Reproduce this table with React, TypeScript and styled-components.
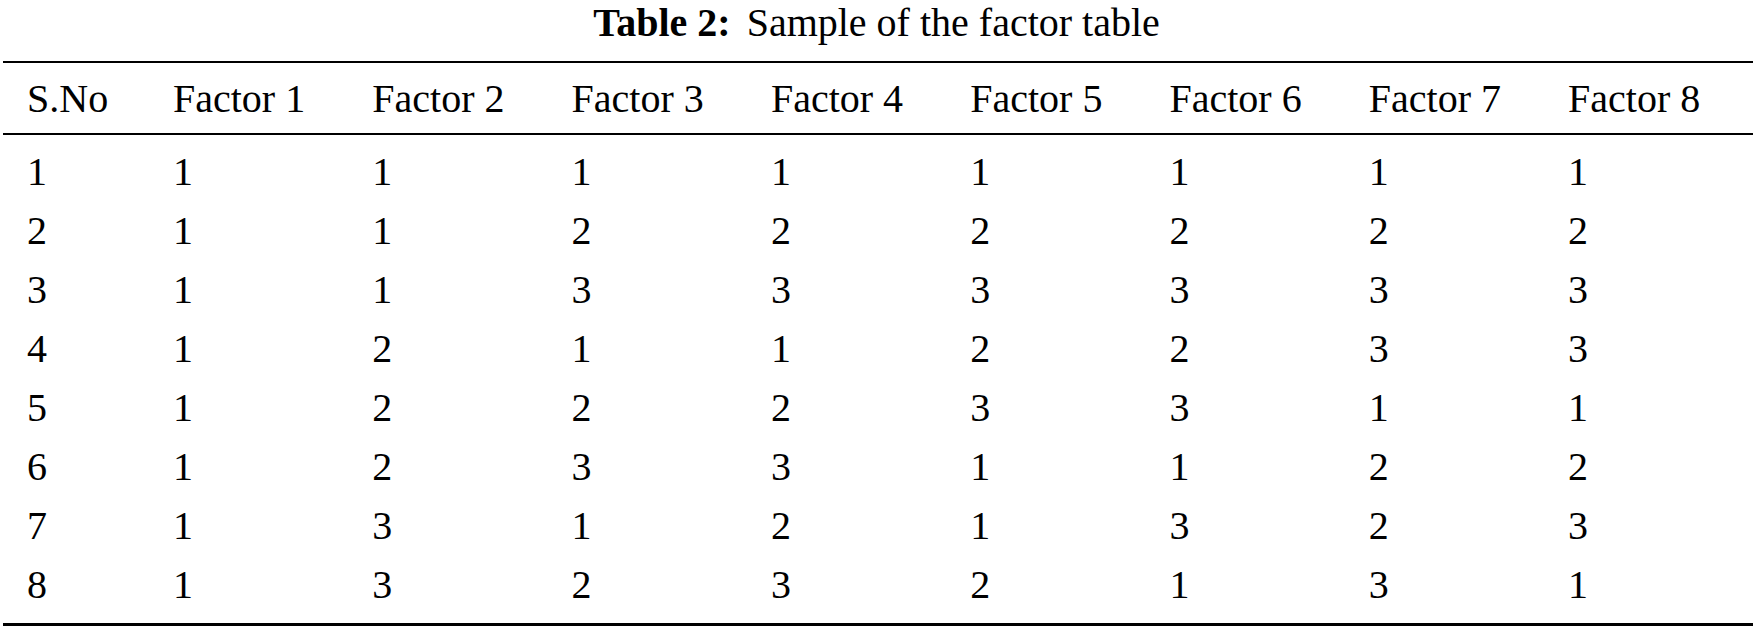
import React from "react";
import styled, { createGlobalStyle } from "styled-components";

const GlobalStyle = createGlobalStyle`
  html, body {
    margin: 0;
    padding: 0;
    background: #ffffff;
  }
  body {
    font-family: "Liberation Serif", "Times New Roman", serif;
    color: #000000;
  }
`;

const Page = styled.div`
  width: 1753px;
  height: 628px;
  display: flex;
  flex-direction: column;
  overflow: hidden;
`;

const Caption = styled.div`
  display: flex;
  justify-content: center;
  align-items: flex-start;
  font-size: 40px;
  line-height: 46px;
  height: 61px;
  box-sizing: border-box;
`;

const CaptionLabel = styled.span`
  font-weight: bold;
`;

const CaptionText = styled.span`
  margin-left: 16px;
`;

const Table = styled.table`
  margin-left: 3px;
  width: 1750px;
  border-collapse: collapse;
  table-layout: fixed;
  font-size: 40px;
`;

const HeadRow = styled.tr`
  border-top: 2px solid #000;
  border-bottom: 2px solid #000;
`;

const HeadCell = styled.th<{ $first?: boolean }>`
  font-weight: normal;
  text-align: left;
  height: 70px;
  padding: 0 0 0 ${(p) => (p.$first ? "24px" : "0")};
  vertical-align: middle;
  white-space: nowrap;
`;

const Body = styled.tbody`
  border-bottom: 3px solid #000;
`;

const BodyRow = styled.tr`
  height: 59px;
`;

const Spacer = styled.tr<{ $h: number }>`
  height: ${(p) => p.$h}px;
`;

const Cell = styled.td<{ $first?: boolean }>`
  text-align: left;
  padding: 0 0 0 ${(p) => (p.$first ? "24px" : "0")};
  vertical-align: middle;
  line-height: 40px;
`;

const headers = [
  "S.No",
  "Factor 1",
  "Factor 2",
  "Factor 3",
  "Factor 4",
  "Factor 5",
  "Factor 6",
  "Factor 7",
  "Factor 8",
];

const rows = [
  [1, 1, 1, 1, 1, 1, 1, 1, 1],
  [2, 1, 1, 2, 2, 2, 2, 2, 2],
  [3, 1, 1, 3, 3, 3, 3, 3, 3],
  [4, 1, 2, 1, 1, 2, 2, 3, 3],
  [5, 1, 2, 2, 2, 3, 3, 1, 1],
  [6, 1, 2, 3, 3, 1, 1, 2, 2],
  [7, 1, 3, 1, 2, 1, 3, 2, 3],
  [8, 1, 3, 2, 3, 2, 1, 3, 1],
];

const colWidths = [170, 199.3, 199.3, 199.3, 199.3, 199.3, 199.3, 199.3];

export default function App() {
  return (
    <>
      <GlobalStyle />
      <Page>
        <Caption>
          <CaptionLabel>Table 2:</CaptionLabel>
          <CaptionText>Sample of the factor table</CaptionText>
        </Caption>
        <Table>
          <colgroup>
            {colWidths.map((w, i) => (
              <col key={i} style={{ width: `${w}px` }} />
            ))}
            <col />
          </colgroup>
          <thead>
            <HeadRow>
              {headers.map((h, i) => (
                <HeadCell key={h} $first={i === 0}>
                  {h}
                </HeadCell>
              ))}
            </HeadRow>
          </thead>
          <Body>
            <Spacer $h={8}>
              <td colSpan={9} />
            </Spacer>
            {rows.map((r, ri) => (
              <BodyRow key={ri}>
                {r.map((v, ci) => (
                  <Cell key={ci} $first={ci === 0}>
                    {v}
                  </Cell>
                ))}
              </BodyRow>
            ))}
            <Spacer $h={10}>
              <td colSpan={9} />
            </Spacer>
          </Body>
        </Table>
      </Page>
    </>
  );
}
